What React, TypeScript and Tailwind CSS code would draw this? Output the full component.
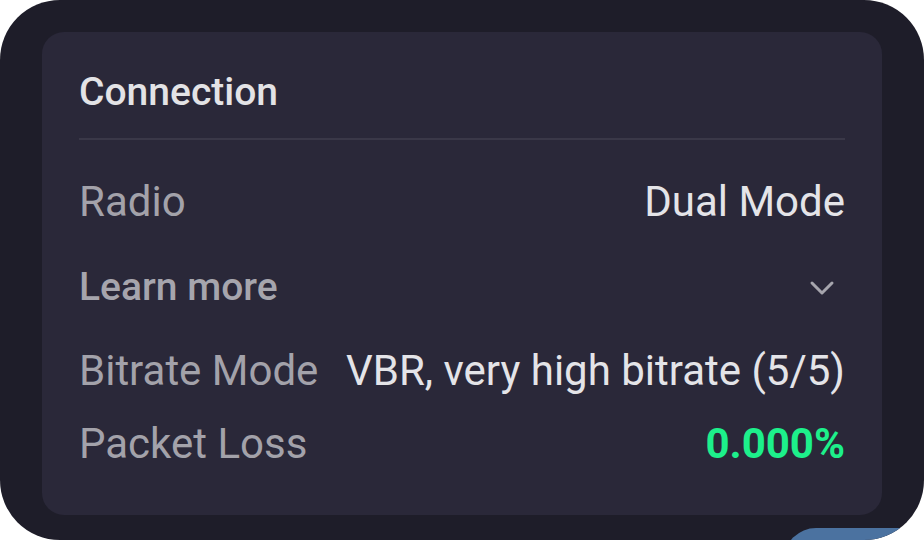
import { ChevronDown } from "lucide-react";

const font = { fontFamily: "Roboto, 'Noto Sans', sans-serif" };

const Row = ({ label, value, className = "", valueClass = "" }: { label: string; value: string; className?: string; valueClass?: string }) => (
  <div className={`flex justify-between text-[42px] leading-[50px] ${className}`}>
    <span className="text-[#a3a2aa]">{label}</span>
    <span className={valueClass || "text-[#e4e4e8]"}>{value}</span>
  </div>
);

export default function App() {
  return (
    <div className="w-[924px] h-[540px] bg-white" style={font}>
      <div className="h-full rounded-[60px] bg-[#1e1d29] overflow-hidden pt-[32px] px-[42px]">
        <div className="h-[483px] rounded-[22px] bg-[#2a2839] px-[37px] pt-[36px]">
          <h2 className="text-[39px] leading-[48px] font-medium text-[#e3e3e6]">Connection</h2>
          <div className="mt-[22px] h-[2px] bg-[#3a3848]" />

          <Row label="Radio" value="Dual Mode" className="mt-[37px]" />

          <div className="mt-[36px] flex items-center justify-between">
            <span className="text-[39px] leading-[48px] font-medium text-[#a6a5ad]">Learn more</span>
            <ChevronDown className="w-[40px] h-[40px] mt-[2px] mr-[3px] text-[#a6a5ad]" strokeWidth={1.8} />
          </div>

          <Row label="Bitrate Mode" value="VBR, very high bitrate (5/5)" className="mt-[35px]" />
          <Row label="Packet Loss" value="0.000%" className="mt-[23px]" valueClass="font-bold text-[#1df08b]" />
        </div>

        <div className="flex justify-end -mr-[42px] mt-[13px]">
          <div className="w-[140px] h-[40px] rounded-tl-[32px] bg-[#4b72a0]" />
        </div>
      </div>
    </div>
  );
}
